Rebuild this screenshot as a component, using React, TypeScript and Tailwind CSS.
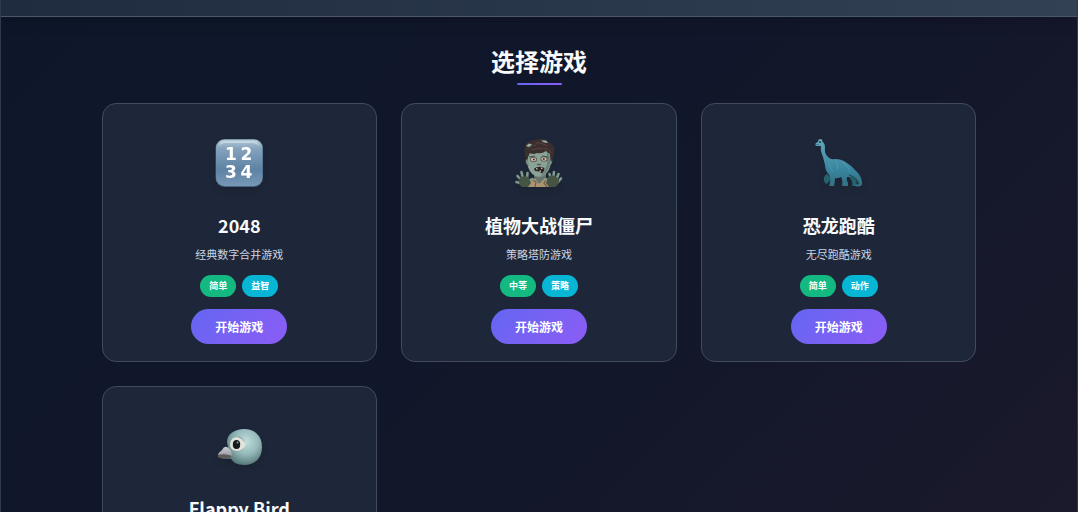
import React from 'react';

interface Game {
  id: string;
  title: string;
  description: string;
  level: string;
  category: string;
  icon: React.ReactNode;
}

const NumbersIcon = () => (
  <svg viewBox="0 0 48 48" className="size-12" aria-hidden="true">
    <defs>
      <linearGradient id="key-face" x1="0" y1="0" x2="0" y2="1">
        <stop offset="0" stopColor="#b4cad9" />
        <stop offset="0.2" stopColor="#83a2bc" />
        <stop offset="0.65" stopColor="#5f83a5" />
        <stop offset="1" stopColor="#7798b5" />
      </linearGradient>
    </defs>
    <rect x="0.5" y="0" width="47.5" height="48" rx="9" fill="#46637f" />
    <rect x="1" y="0.5" width="46.5" height="46.5" rx="8.5" fill="url(#key-face)" />
    <path d="M4 7Q5 2 10 2H38Q43 2 44 7Q42 4 37 4H11Q6 4 4 7Z" fill="#d5e3ea" opacity="0.65" />
    <g fill="#fff" fontFamily="'DejaVu Sans', sans-serif" fontWeight="700" fontSize="17" textAnchor="middle">
      <text x="16" y="21">1</text>
      <text x="31.5" y="21">2</text>
      <text x="16" y="39">3</text>
      <text x="31.5" y="39">4</text>
    </g>
  </svg>
);

const ZombieIcon = () => (
  <svg viewBox="0 0 48 48" className="size-12" aria-hidden="true">
    <path d="M11 48Q12 42 18 40L23 38H29L34 41Q39 43 40 48Z" fill="#ad9572" />
    <path d="M19 38L24 45L31 38V33H19Z" fill="#65776c" />
    <path d="M18 41L21 43L20 48M31 41L29 44L32 48" stroke="#756044" strokeWidth="1.3" fill="none" />
    <path d="M13 13Q12 22 13 28Q16 37 24 38Q32 37 35 28Q37 20 35 12Q28 7 17 9Z" fill="#8ba298" />
    <path d="M32 12Q36 17 35 26Q32 35 25 38Q30 33 32 25Z" fill="#6b8378" />
    <path d="M13 20Q10 19 11 24L14 28M35 20Q38 19 37 24L34 28" fill="#799085" />
    <path d="M12 22Q8 15 10 9Q10 4 14 3Q17 0 23 0.500Q30-1 34 3Q40 6 39.500 13Q39 19 36 23Q35 19 35 15Q33 14 31 12Q27 15 22 14Q18 16 15 14Q13 17 12 22Z" fill="#3b2f2e" />
    <path d="M14 9Q18 5 21 6M21 4Q27 3 32 7M29 10Q34 9 36 14M17 11Q23 8 28 10" stroke="#5c443d" strokeWidth="0.9" fill="none" />
    <path d="M11 7L14 4.500L17 5.500L14 8ZM26 1.500L31 1.500L33 4L29 3.500Z" fill="#96b2a9" />
    <ellipse cx="18.5" cy="20.5" rx="3.6" ry="2.8" fill="#626357" />
    <ellipse cx="29" cy="20" rx="3.6" ry="2.8" fill="#626357" />
    <ellipse cx="18.5" cy="20.5" rx="2.6" ry="1.700" fill="#cdc8b0" />
    <ellipse cx="29" cy="20" rx="2.6" ry="1.700" fill="#cdc8b0" />
    <circle cx="18.8" cy="20.5" r="1.1" fill="#583027" />
    <circle cx="28.8" cy="20" r="1.1" fill="#583027" />
    <path d="M14 18L20 17M27 17L33 18M22 25L24 26L26 25" stroke="#455249" strokeWidth="1.1" fill="none" />
    <path d="M19 29.500Q24 26.500 29.500 29L29 32L27 34.500L24 32.500L20 32Z" fill="#30242a" />
    <path d="M21 29H22.500V30.500H21ZM26 28.500H27.500V30H26ZM24.500 31.500H26V33H24.500Z" fill="#b5af92" />
    <g stroke="#7f978b" strokeWidth="2.6" strokeLinecap="round" fill="none">
      <path d="M8 40L6.500 33M6 41L2.500 37M5 44L1.500 43M12 39L12.500 34M14 42L17.500 40" />
      <path d="M38 40L39 33M41 41L43.500 35M43 43L46 39.500M36 40L34.500 35M34 42L30.500 40" />
    </g>
    <path d="M4 40Q8 35 13 38L16 44L13 48H7Q3 45 4 40Z" fill="#465443" />
    <path d="M33 38Q39 34 44 41Q44 46 40 48H34L31 44Z" fill="#465443" />
  </svg>
);

const DinosaurIcon = () => (
  <svg viewBox="0 0 48 48" className="size-12" aria-hidden="true">
    <defs>
      <linearGradient id="dino-skin" x1="0" y1="0" x2="0" y2="1">
        <stop offset="0" stopColor="#65a9bc" />
        <stop offset="0.65" stopColor="#38849f" />
        <stop offset="1" stopColor="#346f82" />
      </linearGradient>
    </defs>
    <path d="M12 35Q8 37 9 42Q10 45 12 45L17 39ZM34 38Q38 42 37 46H42L40 36Z" fill="#24616a" />
    <path
      d="M0.500 6Q0 3.500 3 3Q3 0 5.500 0Q7.500 0 7.500 3Q10 4 10 9Q9 14 13 18Q16 21 20 20Q27 20 32 24Q37 27 40 31Q46 36 47 43Q48 48 42 47.500L36 46Q41 46 44 45Q43 40 38 38L32 38Q31 41 33 44L33 47H27Q28 41 26 38Q22 40 20 39Q20 43 19 47H14Q16 41 15 37Q10 32 10 26L8 18Q5 11 6 7L1 7Z"
      fill="url(#dino-skin)"
    />
    <path d="M20 22Q24 24 22 31M27 23Q34 27 35 34M14 24Q15 29 18 33" stroke="#65afc0" strokeWidth="1.2" fill="none" opacity="0.35" />
    <path d="M34 36Q41 38 44 45" stroke="#20575b" strokeWidth="1.5" fill="none" />
    <circle cx="5" cy="3" r="1" fill="#173a48" />
    <path d="M1 5.500L4 5.500" stroke="#236176" strokeWidth="0.6" />
  </svg>
);

const BirdIcon = () => (
  <svg viewBox="0 0 48 48" className="size-12" aria-hidden="true">
    <defs>
      <radialGradient id="bird-head" cx="0.55" cy="0.35" r="0.65">
        <stop offset="0" stopColor="#c0dddd" />
        <stop offset="0.55" stopColor="#94b8b8" />
        <stop offset="1" stopColor="#577979" />
      </radialGradient>
      <linearGradient id="bird-beak" x1="0" y1="0" x2="0" y2="1">
        <stop offset="0" stopColor="#cdced4" />
        <stop offset="1" stopColor="#85878e" />
      </linearGradient>
    </defs>
    <path d="M12 20C12 12 20 7 29 7C40 7 47 14 47 25C47 36 40 43 29 43C22 43 17 40 15 35Z" fill="url(#bird-head)" />
    <ellipse cx="22" cy="22" rx="7.800" ry="7.500" fill="#809b9a" />
    <path d="M15 22Q16 15 22 15Q28 16 31 23Q27 29 22 29Q15 29 15 22Z" fill="#e1e2dc" />
    <ellipse cx="21.500" cy="22.500" rx="3.700" ry="4.500" fill="#15191b" />
    <circle cx="22.500" cy="20.500" r="1" fill="#929b98" />
    <path d="M3 33Q3 31 7 28Q9 24 12 25Q17 28 17 34L15 37Q8 37 3 35Z" fill="url(#bird-beak)" />
    <path d="M3 33Q10 31 17 34L14 37Q7 37 3 35Z" fill="#5b5b57" />
  </svg>
);

const GAMES: Game[] = [
  { id: '2048', title: '2048', description: '经典数字合并游戏', level: '简单', category: '益智', icon: <NumbersIcon /> },
  { id: 'pvz', title: '植物大战僵尸', description: '策略塔防游戏', level: '中等', category: '策略', icon: <ZombieIcon /> },
  { id: 'dino', title: '恐龙跑酷', description: '无尽跑酷游戏', level: '简单', category: '动作', icon: <DinosaurIcon /> },
  { id: 'flappy', title: 'Flappy Bird', description: '经典飞行游戏', level: '中等', category: '动作', icon: <BirdIcon /> },
];

const GameCard: React.FC<{ game: Game }> = ({ game }) => (
  <article className="flex flex-col items-center rounded-[14px] border border-[#414b5d] bg-[#1e2739] px-4 pt-[35px] pb-[17px] text-center">
    <div className="drop-shadow-md">{game.icon}</div>
    <h3 className="mt-[26px] text-lg leading-6 font-bold text-slate-50">{game.title}</h3>
    <p className="mt-2 text-[11px] leading-[18px] text-slate-300">{game.description}</p>
    <div className="mt-3 flex gap-[6px] text-[9px] leading-[22px] font-bold text-white">
      <span className="rounded-full bg-[#14b981] px-[9px]">{game.level}</span>
      <span className="rounded-full bg-[#06b6d4] px-[9px]">{game.category}</span>
    </div>
    <button
      type="button"
      className="mt-3 cursor-pointer rounded-full bg-linear-135 from-[#6366f1] to-[#8b5cf6] px-6 text-xs leading-[35px] font-bold text-white"
    >
      开始游戏
    </button>
  </article>
);

const App: React.FC = () => {
  return (
    <div className="h-screen overflow-hidden border-x border-[#303a4c] bg-linear-135 from-[#0e172a] via-[#12172a] via-60% to-[#1b192c] font-['Noto_Sans_CJK_SC',sans-serif]">
      <header className="h-[17px] border-b border-[#4b586a] bg-linear-to-r from-[#1f2c40] to-[#334155] shadow-lg" />
      <main className="mx-auto max-w-[875px] pt-7">
        <div className="flex flex-col items-center">
          <h2 className="text-2xl leading-8 font-bold text-slate-50">选择游戏</h2>
          <div className="mt-[6px] h-[2px] w-[45px] rounded-full bg-linear-to-r from-[#6366f1] to-[#8b5cf6]" />
        </div>
        <section className="mt-[18px] grid grid-cols-3 gap-6">
          {GAMES.map((game) => (
            <GameCard key={game.id} game={game} />
          ))}
        </section>
      </main>
    </div>
  );
};

export default App;
